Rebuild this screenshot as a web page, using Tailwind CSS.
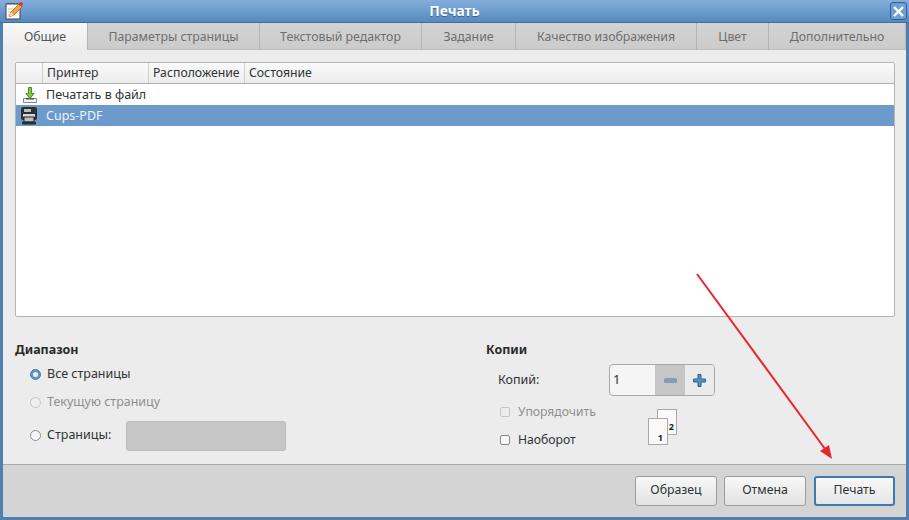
<!doctype html>
<html><head><meta charset="utf-8"><script src="https://cdn.jsdelivr.net/npm/@tailwindcss/browser@4"></script></head>
<body class="m-0 overflow-hidden">
<div class="relative w-[909px] h-[520px] flex flex-col overflow-hidden bg-[#4f7fb3] font-['Noto_Sans','Open_Sans',sans-serif] text-[12.5px] text-[#2e3436]">
  <div class="relative h-[23px] shrink-0 flex items-center justify-center bg-gradient-to-b from-[#85aedc] to-[#558abf] text-white text-[13.8px] font-bold border-b border-[#3f6e9f]">
    <span class="[text-shadow:0_1px_1px_#2f5d8c]">Печать</span>
    <svg class="absolute left-[5px] top-[1px]" width="18" height="19" viewBox="0 0 18 19"><rect x="1" y="3" width="14" height="15" fill="#fff" stroke="#444"/><path d="M3 3v-1M6 3v-1M9 3v-1M12 3v-1" stroke="#333"/><path d="M3 8h6M3 11h5M3 14h4" stroke="#bbb"/><path d="M4 16l2-5 8-8 3 3-8 8z" fill="#f2a43a" stroke="#a35f10" stroke-width=".7"/><path d="M4 16l2-5 3 3z" fill="#f5dcb0"/><circle cx="16" cy="3" r="2" fill="#e0304a"/></svg>
    <div class="absolute right-[2px] top-[2px] w-[17px] h-[18px] flex items-center justify-center rounded-[3px] border border-[#2f5f95] bg-[#6f9fd2]">
      <svg width="13" height="13" viewBox="0 0 13 13"><path d="M2 2l9 9M11 2l-9 9" stroke="#fff" stroke-width="2.4"/></svg>
    </div>
  </div>
  <div class="flex-1 mx-[3px] mb-[3px] flex flex-col min-h-0 bg-[#ececec]">
    <div class="h-[27px] shrink-0 flex text-[12.3px] text-[#6e6e6e]">
      <div class="w-[84px] pt-[2px] flex items-center justify-center bg-gradient-to-b from-[#f8f8f8] to-[#ececec] rounded-t-[3px] text-[#555]">Общие</div>
      <div class="w-[173px] pt-[2px] flex items-center justify-center bg-gradient-to-b from-[#d3d3d3] to-[#cbcbcb] border-b border-[#bdbdbd] border-r border-r-[#b4b4b4] border-l border-l-[#b4b4b4]">Параметры страницы</div>
      <div class="w-[162px] pt-[2px] flex items-center justify-center bg-gradient-to-b from-[#d3d3d3] to-[#cbcbcb] border-b border-[#bdbdbd] border-r border-r-[#b4b4b4]">Текстовый редактор</div>
      <div class="w-[94px] pt-[2px] flex items-center justify-center bg-gradient-to-b from-[#d3d3d3] to-[#cbcbcb] border-b border-[#bdbdbd] border-r border-r-[#b4b4b4]">Задание</div>
      <div class="w-[181px] pt-[2px] flex items-center justify-center bg-gradient-to-b from-[#d3d3d3] to-[#cbcbcb] border-b border-[#bdbdbd] border-r border-r-[#b4b4b4]">Качество изображения</div>
      <div class="w-[72px] pt-[2px] flex items-center justify-center bg-gradient-to-b from-[#d3d3d3] to-[#cbcbcb] border-b border-[#bdbdbd] border-r border-r-[#b4b4b4]">Цвет</div>
      <div class="w-[137px] pt-[2px] flex items-center justify-center bg-gradient-to-b from-[#d3d3d3] to-[#cbcbcb] border-b border-[#bdbdbd] border-r border-r-[#b4b4b4]">Дополнительно</div>
    </div>
    <div class="ml-[12px] mr-[11px] mt-[12px] h-[255px] shrink-0 bg-white border border-[#b5b5b5] rounded-[2px] flex flex-col">
      <div class="h-[21px] shrink-0 flex bg-gradient-to-b from-[#fafafa] to-[#ececec] border-b border-[#b0b0b0] text-[12.25px]">
        <div class="w-[27px] border-r border-[#cfcfcf]"></div>
        <div class="w-[106px] pl-[4px] border-r border-[#cfcfcf] leading-[19px]">Принтер</div>
        <div class="w-[96px] pl-[4px] border-r border-[#cfcfcf] leading-[19px] whitespace-nowrap">Расположение</div>
        <div class="pl-[4px] leading-[19px]">Состояние</div>
      </div>
      <div class="h-[21px] flex items-center">
        <svg class="ml-[6px] mr-[8px]" width="16" height="18" viewBox="0 0 16 18"><path d="M1.5 12.5h13v4h-13z" fill="#f2f2f2" stroke="#888"/><path d="M4 12h8v1.5H4z" fill="#555"/><path d="M6.5 1.5h3v6h2.500l-4 5-4-5h2.500z" fill="#8ac64a" stroke="#4a8a22"/></svg>
        <span class="whitespace-nowrap pt-[1px]">Печатать в файл</span>
      </div>
      <div class="h-[21px] flex items-center bg-[#6b9acb] text-[#eef3f9]">
        <svg class="ml-[4px] mr-[8px]" width="18" height="19" viewBox="0 0 18 19"><rect x="1" y="1" width="16" height="13" rx="2" fill="#2e2e2e"/><rect x="4" y="3" width="7" height="3" fill="#bbb"/><rect x="3" y="8" width="12" height="3" fill="#d5d5d5"/><rect x="4" y="11" width="10" height="5" fill="#bfbfbf" stroke="#222"/><rect x="2" y="15.500" width="14" height="3" rx="1" fill="#2e2e2e"/></svg>
        <span class="pt-[1px]">Cups-PDF</span>
      </div>
    </div>
    <div class="flex-1 flex min-h-0 relative">
      <div class="w-[471px] pl-[12px] pt-[25px]">
        <div class="font-bold leading-[16px] text-[#2a2a2a]">Диапазон</div>
        <div class="pl-[15px] mt-[4px] flex flex-col">
          <label class="h-[24px] flex items-center gap-[6px]"><span class="w-[11px] h-[11px] rounded-full bg-[#5f92c8] border border-[#4d7fb3] flex items-center justify-center"><span class="w-[5px] h-[5px] rounded-full bg-white/90"></span></span><span>Все страницы</span></label>
          <label class="h-[24px] mt-[4px] flex items-center gap-[6px] text-[#8f8f8f]"><span class="w-[11px] h-[11px] rounded-full bg-[#efefef] border border-[#c6c6c6]"></span><span>Текущую страницу</span></label>
          <div class="h-[32px] mt-[6px] flex items-center">
            <span class="w-[11px] h-[11px] rounded-full bg-[#f6f6f6] border border-[#8e8e8e] mr-[6px] mb-[2px]"></span>
            <span class="pb-[2px]">Страницы:</span>
            <div class="ml-[15px] w-[160px] h-[30px] rounded-[3px] bg-[#c6c6c6] border border-[#bcbcbc]"></div>
          </div>
        </div>
      </div>
      <div class="flex-1 pt-[25px] relative">
        <div class="font-bold leading-[16px] text-[#2a2a2a] ml-[12px]">Копии</div>
        <div class="ml-[24px] mt-[6px] flex items-center h-[32px]">
          <span class="w-[111px]">Копий:</span>
          <div class="w-[106px] h-[32px] flex rounded-[4px] border border-[#a8a8a8] overflow-hidden bg-[#f5f5f5]">
            <div class="w-[45px] pl-[3px] leading-[29px] text-[13px]">1</div>
            <div class="w-[30px] bg-[#c6c6c6] flex items-center justify-center"><svg width="13" height="5"><rect x="0" y="0.5" width="13" height="4" rx="1.5" fill="#7f9dbd" stroke="#6788ab" stroke-width=".5"/></svg></div>
            <div class="flex-1 bg-[#ebebeb] flex items-center justify-center"><svg width="13" height="13" viewBox="0 0 13 13"><path d="M5 0.5h3v4.5h4.5v3H8v4.5H5V8H0.5V5H5z" fill="#5d8fc7" stroke="#2f5f95"/></svg></div>
          </div>
        </div>
        <div class="ml-[26px] mt-[6px] flex flex-col text-[12.2px]">
          <label class="h-[20px] flex items-center gap-[8px] text-[#8f8f8f]"><span class="w-[10px] h-[10px] rounded-[2px] bg-[#ededed] border border-[#c6c6c6]"></span><span>Упорядочить</span></label>
          <label class="h-[20px] mt-[8px] flex items-center gap-[8px]"><span class="w-[10px] h-[10px] rounded-[2px] bg-[#f8f8f8] border border-[#8a8a8a]"></span><span>Наоборот</span></label>
        </div>
        <div class="absolute left-[174px] top-[92px] w-[31px] h-[37px] text-[9px] font-bold text-[#222] leading-none">
          <div class="absolute left-[9px] top-0 w-[20px] h-[26px] bg-[#f9f9f9] border border-[#a9a9a9] flex items-end justify-end pr-[2px] pb-[3px]">2</div>
          <div class="absolute left-0 top-[9px] w-[20px] h-[27px] bg-[#f9f9f9] border border-[#a9a9a9] flex items-end justify-end pr-[4px] pb-[2px]">1</div>
        </div>
      </div>
    </div>
    <div class="h-[53px] shrink-0 bg-[#d4d4d4] border-t border-[#a8a8a8] flex items-center justify-end gap-[7px] pr-[11px] pb-[1px] text-[12.3px]">
      <div class="w-[82px] h-[30px] flex items-center justify-center rounded-[3px] border border-[#9c9c9c] bg-gradient-to-b from-[#f8f8f8] to-[#e2e2e2]">Образец</div>
      <div class="w-[82px] h-[30px] mr-[1px] flex items-center justify-center rounded-[3px] border border-[#9c9c9c] bg-gradient-to-b from-[#f8f8f8] to-[#e2e2e2]">Отмена</div>
      <div class="w-[81px] h-[30px] flex items-center justify-center rounded-[3px] border-2 border-[#3f78b3] bg-gradient-to-b from-[#f8f8f8] to-[#e6e6e6]">Печать</div>
    </div>
  </div>
  <svg class="absolute left-0 top-0 pointer-events-none" width="909" height="520"><path d="M697 274L828 453" stroke="#e8272c" stroke-width="2" fill="none"/><path d="M832 459L820 451L829 445z" fill="#e8272c"/></svg>
</div>
</body></html>
